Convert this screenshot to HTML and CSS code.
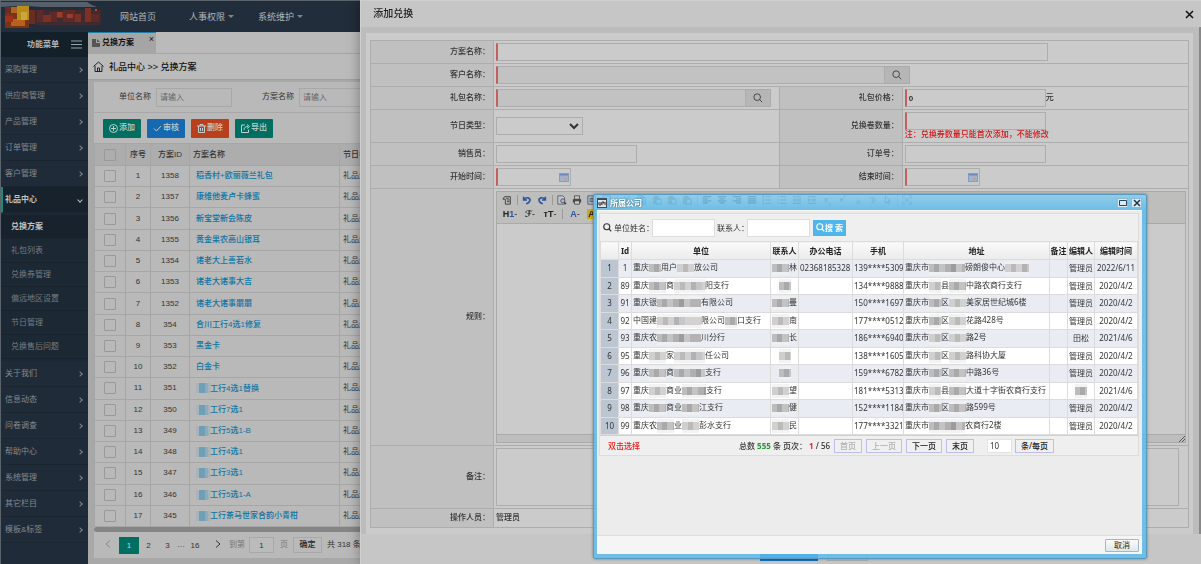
FILE: index.html
```html
<!DOCTYPE html>
<html lang="zh-CN">
<head>
  <meta charset="UTF-8">
  <meta name="viewport" content="width=device-width, initial-scale=1.0">
  <title>兑换方案</title>
  <link rel="stylesheet" href="styles.css">
</head>
<body>
  <svg width="0" height="0" class="defs">
    <symbol id="i-search" viewBox="0 0 12 12"><circle cx="5" cy="5" r="4" fill="none" stroke="currentColor"/><path d="M8 8l3 3" stroke="currentColor" fill="none"/></symbol>
    <symbol id="i-cal" viewBox="0 0 10 9"><path d="M0 0h10v9H0z" fill="#8a9cbc"/><path d="M1 3h8v5H1z" fill="#a3b2cc"/><path d="M1 1h8v1H1z" fill="#6a8bc0"/><path d="M5 5h3v2H5z" fill="#d09a8a"/></symbol>
    <symbol id="i-paste" viewBox="0 0 12 12"><path d="M1 2h8v9H1z" fill="#8a7d55"/><path d="M3 1h4v2H3z" fill="#555"/><path d="M5 5h6v6H5z" fill="#a9bfd8" stroke="#456"/></symbol>
  </svg>

  <div class="app">
    <header class="topbar">
      <div class="logo">
        <svg width="104" height="30" shape-rendering="crispEdges">
          <path d="M0 0h86q4 3 10 5H40Q20 3 0 5z" fill="#56606a" shape-rendering="auto"/>
          <path d="M30 8h70v12H30z" fill="#3f2a30"/>
          <path d="M4 6h24v20H4z" fill="#7a3218"/><path d="M4 5h8v6H4zM28 8h6v14h-6z" fill="#6b2c20"/>
          <path d="M10 5h6v6h-6zM10 17h14v7H10z" fill="#b4621c"/><path d="M16 4h12v14H16z" fill="#b98d1c"/>
          <path d="M20 10h6v8h-6z" fill="#cba83a"/><path d="M4 14h8v6H4z" fill="#a0301a"/>
          <path d="M36 8h6v12h-6zM48 10h8v12h-8zM62 8h12v12H62zM90 12h8v8h-8z" fill="#5e2a29"/>
          <path d="M42 13h8v8h-8zM56 10h6v6h-6zM74 12h6v10h-6zM84 6h6v14h-6z" fill="#7b3226"/>
          <path d="M56 10h5v5h-5zM66 12h6v4h-6z" fill="#a03c22"/>
          <path d="M34 20h66v3H34z" fill="#3f2a30"/><path d="M94 7h2v2h-2z" fill="#d03c1c"/>
        </svg>
      </div>
      <nav class="topnav">
        <a href="#">网站首页</a>
        <a href="#" class="drop">人事权限</a>
        <a href="#" class="drop">系统维护</a>
      </nav>
    </header>

    <div class="layout">
      <aside class="sidebar">
        <div class="side-title"><span>功能菜单</span><svg width="11" height="9"><path d="M0 1h11M0 4.500h11M0 8h11" stroke="#9aa0a5"/></svg></div>
        <a href="#" class="item">采购管理</a>
        <a href="#" class="item">供应商管理</a>
        <a href="#" class="item">产品管理</a>
        <a href="#" class="item">订单管理</a>
        <a href="#" class="item">客户管理</a>
        <a href="#" class="item open">礼品中心</a>
        <div class="sub">
          <a href="#" class="on">兑换方案</a>
          <a href="#">礼包列表</a>
          <a href="#">兑换券管理</a>
          <a href="#">偏远地区设置</a>
          <a href="#">节日管理</a>
          <a href="#">兑换售后问题</a>
        </div>
        <a href="#" class="item">关于我们</a>
        <a href="#" class="item">信息动态</a>
        <a href="#" class="item">问卷调查</a>
        <a href="#" class="item">帮助中心</a>
        <a href="#" class="item">系统管理</a>
        <a href="#" class="item">其它栏目</a>
        <a href="#" class="item">模板&amp;标签</a>
      </aside>

      <main class="main">
        <div class="tabs">
          <a href="#" class="tab"><svg width="8" height="8"><path d="M0 0h4v4h4v4H0z" fill="#555"/><path d="M5 0l3 3H5z" fill="#555"/></svg>兑换方案<span class="tab-x">×</span></a>
        </div>
        <div class="crumb">
          <svg width="11" height="11" viewBox="0 0 11 11" fill="none" stroke="#222"><path d="M.5 5.500L5.500 1l5 4.500M2 5v5.500h7V5M4.500 10V7h2v3"/></svg>
          礼品中心 &gt;&gt; 兑换方案
        </div>
        <div class="panel">
          <form class="filter">
            <label for="f1">单位名称</label><input id="f1" type="text" placeholder="请输入">
            <label for="f2">方案名称</label><input id="f2" type="text" placeholder="请输入">
          </form>
          <div class="tools">
            <button class="btn"><svg width="9" height="9" viewBox="0 0 9 9" fill="none" stroke="currentColor"><circle cx="4.500" cy="4.500" r="4"/><path d="M2 4.500h5M4.500 2v5"/></svg>添加</button>
            <button class="btn blue"><svg width="9" height="9" viewBox="0 0 9 9" fill="none" stroke="currentColor"><path d="M1 4.500L3.500 7 8 2"/></svg>审核</button>
            <button class="btn red"><svg width="9" height="9" viewBox="0 0 9 9" fill="none" stroke="currentColor"><path d="M0 2h9M3 2V.5h3V2M1.500 2v6.500h6V2M3.500 4v3M5.500 4v3"/></svg>删除</button>
            <button class="btn"><svg width="9" height="9" viewBox="0 0 9 9" fill="none" stroke="currentColor"><path d="M4 1H.5v7.500h7V5.500M3 6c0-2 1-3.500 4-3.500M6 .5l2.500 2L6 4.500"/></svg>导出</button>
          </div>
          <div class="grid-wrap">
            <table class="grid">
              <colgroup><col class="g1"><col class="g2"><col class="g3"><col class="g4"><col></colgroup>
              <thead><tr><th><input type="checkbox" aria-label="全选"></th><th>序号</th><th>方案ID</th><th class="l">方案名称</th><th class="l">节日名称</th></tr></thead>
              <tbody>
                <tr><td><input type="checkbox" aria-label="1358"></td><td>1</td><td>1358</td><td><a href="#">稻香村+欧丽薇兰礼包</a></td><td>礼品册</td></tr>
                <tr><td><input type="checkbox" aria-label="1357"></td><td>2</td><td>1357</td><td><a href="#">康维他麦卢卡蜂蜜</a></td><td>礼品册</td></tr>
                <tr><td><input type="checkbox" aria-label="1356"></td><td>3</td><td>1356</td><td><a href="#">新宝堂新会陈皮</a></td><td>礼品册</td></tr>
                <tr><td><input type="checkbox" aria-label="1355"></td><td>4</td><td>1355</td><td><a href="#">黄金果农高山银耳</a></td><td>礼品册</td></tr>
                <tr><td><input type="checkbox" aria-label="1354"></td><td>5</td><td>1354</td><td><a href="#">诸老大上善若水</a></td><td>礼品册</td></tr>
                <tr><td><input type="checkbox" aria-label="1353"></td><td>6</td><td>1353</td><td><a href="#">诸老大诸事大吉</a></td><td>礼品册</td></tr>
                <tr><td><input type="checkbox" aria-label="1352"></td><td>7</td><td>1352</td><td><a href="#">诸老大诸事朤朤</a></td><td>礼品册</td></tr>
                <tr><td><input type="checkbox" aria-label="354"></td><td>8</td><td>354</td><td><a href="#">合川工行4选1修复</a></td><td>礼品册</td></tr>
                <tr><td><input type="checkbox" aria-label="353"></td><td>9</td><td>353</td><td><a href="#">黑金卡</a></td><td>礼品册</td></tr>
                <tr><td><input type="checkbox" aria-label="352"></td><td>10</td><td>352</td><td><a href="#">白金卡</a></td><td>礼品册</td></tr>
                <tr><td><input type="checkbox" aria-label="351"></td><td>11</td><td>351</td><td><a href="#"><i class="mk"></i>工行4选1替换</a></td><td>礼品册</td></tr>
                <tr><td><input type="checkbox" aria-label="350"></td><td>12</td><td>350</td><td><a href="#"><i class="mk"></i>工行7选1</a></td><td>礼品册</td></tr>
                <tr><td><input type="checkbox" aria-label="349"></td><td>13</td><td>349</td><td><a href="#"><i class="mk"></i>工行5选1-B</a></td><td>礼品册</td></tr>
                <tr><td><input type="checkbox" aria-label="348"></td><td>14</td><td>348</td><td><a href="#"><i class="mk"></i>工行4选1</a></td><td>礼品册</td></tr>
                <tr><td><input type="checkbox" aria-label="347"></td><td>15</td><td>347</td><td><a href="#"><i class="mk"></i>工行3选1</a></td><td>礼品册</td></tr>
                <tr><td><input type="checkbox" aria-label="346"></td><td>16</td><td>346</td><td><a href="#"><i class="mk"></i>工行5选1-A</a></td><td>礼品册</td></tr>
                <tr><td><input type="checkbox" aria-label="345"></td><td>17</td><td>345</td><td><a href="#"><i class="mk"></i>工行茶马世家合韵小青柑</a></td><td>礼品册</td></tr>
              </tbody>
            </table>
          </div>
          <div class="hscroll"></div>
          <div class="pager">
            <a href="#" class="arr off"><svg width="6" height="8" fill="none" stroke="currentColor"><path d="M5 .5L1 4l4 3.500"/></svg></a>
            <a href="#" class="cur">1</a><a href="#">2</a><a href="#">3</a><span class="dots">…</span><a href="#" class="p16">16</a>
            <a href="#" class="arr"><svg width="6" height="8" fill="none" stroke="currentColor"><path d="M1 .5L5 4 1 7.500"/></svg></a>
            <label for="pg" class="dim">到第</label><input id="pg" type="text" value="1"><span class="dim">页</span>
            <button class="ok">确定</button><span>共 318 条</span>
          </div>
        </div>
      </main>
    </div>
  </div>

  <section class="drawer">
    <header class="drawer-head"><h1>添加兑换</h1><button class="x" aria-label="关闭"><svg width="9" height="9" stroke="#111" stroke-width="1.500"><path d="M1 1l7 7M8 1L1 8"/></svg></button></header>
    <div class="drawer-body">
      <form class="sheet">
        <table class="form">
          <colgroup><col class="c-l"><col class="c-f"><col class="c-l"><col class="c-f"></colgroup>
          <tr><th><label for="a1">方案名称：</label></th><td colspan="3"><input id="a1" class="req wide" type="text"></td></tr>
          <tr><th><label for="a2">客户名称：</label></th><td colspan="3"><div class="pick cust"><input id="a2" class="req" type="text" readonly><button type="button" aria-label="选择客户"><svg width="10" height="10"><use href="#i-search"/></svg></button></div></td></tr>
          <tr><th><label for="a3">礼包名称：</label></th><td><div class="pick gift"><input id="a3" class="req" type="text" readonly><button type="button" aria-label="选择礼包"><svg width="10" height="10"><use href="#i-search"/></svg></button></div></td>
            <th><label for="a4">礼包价格：</label></th><td><div class="pick"><input id="a4" class="req mid num" type="text" value="0"><span>元</span></div></td></tr>
          <tr><th><label for="a5">节日类型：</label></th><td><select id="a5"><option></option></select></td>
            <th><label for="a6">兑换卷数量：</label></th><td><input id="a6" class="req mid" type="text"><p class="note">注：兑换券数量只能首次添加，不能修改</p></td></tr>
          <tr><th><label for="a7">销售员：</label></th><td><input id="a7" class="mid" type="text"></td>
            <th><label for="a8">订单号：</label></th><td><input id="a8" class="mid" type="text"></td></tr>
          <tr><th><label for="a9">开始时间：</label></th><td><div class="date"><input id="a9" class="req" type="text"><svg width="10" height="9"><use href="#i-cal"/></svg></div></td>
            <th><label for="a10">结束时间：</label></th><td><div class="date"><input id="a10" class="req" type="text"><svg width="10" height="9"><use href="#i-cal"/></svg></div></td></tr>
          <tr><th><label for="rule">规则：</label></th><td colspan="3">
            <div class="editor">
              <div class="ed-tools">
                <div class="ed-row">
                  <button type="button" aria-label="源代码"><svg viewBox="0 0 12 12"><path d="M3 2h7v9H4V5H1l2-3z" fill="#bbb" stroke="#333"/><path d="M5 4h3M6 6h3M6 8h3" stroke="#333"/></svg></button><i></i>
                  <button type="button" aria-label="撤销"><svg viewBox="0 0 12 12"><path d="M2 2v4h4M2.500 5.500C5 2 10 3 9.500 6.500 9 9 7 10 5 10.500" fill="none" stroke="#2c56a0" stroke-width="2"/></svg></button>
                  <button type="button" aria-label="重做"><svg viewBox="0 0 12 12"><path d="M10 2v4H6M9.500 5.500C7 2 2 3 2.500 6.500 3 9 5 10 7 10.500" fill="none" stroke="#2c56a0" stroke-width="2"/></svg></button><i></i>
                  <button type="button" aria-label="预览"><svg viewBox="0 0 12 12"><path d="M1 1h6l2 2v8H1z" fill="#c4c8cc" stroke="#556"/><circle cx="7" cy="7" r="2.500" fill="#a8bac8" stroke="#445"/><path d="M9 9l2 2" stroke="#333" stroke-width="1.500"/></svg></button>
                  <button type="button" aria-label="打印"><svg viewBox="0 0 12 12"><path d="M3 1h6v4H3z" fill="#ccc" stroke="#444"/><path d="M1 5h10v4H1z" fill="#444"/><path d="M3 7h6v4H3z" fill="#ccc" stroke="#444"/></svg></button>
                  <button type="button" aria-label="模板"><svg viewBox="0 0 12 12"><path d="M1 1h9v10H1z" fill="#b5bfca" stroke="#456"/><path d="M3 4h5M3 6h5M3 8h5" stroke="#345"/></svg></button>
                  <button type="button" aria-label="代码"><svg viewBox="0 0 12 12"><path d="M1 1h9v10H1z" fill="#b5bfca" stroke="#456"/></svg></button><i></i>
                  <button type="button" aria-label="剪切"><svg viewBox="0 0 12 12"><path d="M3 1l5 8M9 1L4 9" stroke="#456"/></svg></button>
                  <button type="button" aria-label="复制"><svg viewBox="0 0 12 12"><path d="M1 1h6v8H1zM4 3h6v8H4z" fill="#9db6d0" stroke="#456"/></svg></button>
                  <button type="button" aria-label="粘贴"><svg><use href="#i-paste"/></svg></button>
                  <button type="button" aria-label="粘贴文本"><svg><use href="#i-paste"/></svg></button>
                  <button type="button" aria-label="粘贴Word"><svg><use href="#i-paste"/></svg></button><i></i>
                  <button type="button" aria-label="左对齐"><svg viewBox="0 0 12 12"><path d="M1 2h10M1 4.500h6M1 7h10M1 9.500h6" stroke="#333" stroke-width="1.500"/></svg></button>
                  <button type="button" aria-label="居中"><svg viewBox="0 0 12 12"><path d="M1 2h10M3 4.500h6M1 7h10M3 9.500h6" stroke="#333" stroke-width="1.500"/></svg></button>
                  <button type="button" aria-label="右对齐"><svg viewBox="0 0 12 12"><path d="M1 2h10M5 4.500h6M1 7h10M5 9.500h6" stroke="#333" stroke-width="1.500"/></svg></button>
                  <button type="button" aria-label="两端对齐"><svg viewBox="0 0 12 12"><path d="M1 2h10M1 4.500h10M1 7h10M1 9.500h10" stroke="#333" stroke-width="1.500"/></svg></button>
                  <button type="button" aria-label="编号"><svg viewBox="0 0 12 12"><path d="M4 2h7M4 6h7M4 10h7M1.500 0v4M1.500 5v3M1.500 9v3" stroke="#444"/></svg></button>
                  <button type="button" aria-label="项目符号"><svg viewBox="0 0 12 12"><path d="M4 2h7M4 6h7M4 10h7M1 2h1.500M1 6h1.500M1 10h1.500" stroke="#444"/></svg></button>
                  <button type="button" aria-label="增加缩进"><svg viewBox="0 0 12 12"><path d="M1 2h10M6 5h5M6 7h5M1 10h10M1 6h4M3 4l2 2-2 2" fill="none" stroke="#444"/></svg></button>
                  <button type="button" aria-label="减少缩进"><svg viewBox="0 0 12 12"><path d="M1 2h10M6 5h5M6 7h5M1 10h10M1 6h4M3 4L1 6l2 2" fill="none" stroke="#444"/></svg></button>
                  <button type="button">x<sub>₂</sub></button>
                  <button type="button">x<sup>²</sup></button>
                  <button type="button" aria-label="清理"><svg viewBox="0 0 12 12"><path d="M3 1l4 5-3 4 6 1-1-5-2-1z" fill="#a58a3a"/></svg></button>
                  <button type="button" aria-label="快速排版"><svg viewBox="0 0 12 12"><path d="M2 2h6l3 4-5 5-1-3 2-2z" fill="#8c9450"/></svg></button>
                  <button type="button" aria-label="全选"><svg viewBox="0 0 12 12"><path d="M4 1v9l2-2 2 3 1-1-1.500-3H10z" fill="#ccd" stroke="#456"/></svg></button><i></i>
                  <button type="button" aria-label="全屏"><svg viewBox="0 0 12 12"><path d="M1 4V1h3M8 1h3v3M11 8v3H8M4 11H1V8M3 3l6 6M9 3L3 9" fill="none" stroke="#567"/></svg></button>
                </div>
                <div class="ed-row txt">
                  <button type="button"><b>H<em>1</em></b>-</button>
                  <button type="button"><b class="script">ℱ</b>-</button>
                  <button type="button"><b>тT</b>-</button><i></i>
                  <button type="button"><b class="fc">A</b>-</button>
                  <button type="button" class="hl"><b class="bc">A</b>-</button>
                </div>
              </div>
              <textarea id="rule"></textarea>
              <div class="ed-foot"><svg width="6" height="6" stroke="#555"><path d="M0 6l6-6M3 6l3-3"/></svg></div>
            </div>
          </td></tr>
          <tr><th><label for="memo">备注：</label></th><td colspan="3"><textarea id="memo" class="memo"></textarea></td></tr>
          <tr><th>操作人员：</th><td colspan="3" class="op">管理员</td></tr>
        </table>
      </form>
    </div>
    <footer class="drawer-foot"><button class="save" aria-label="提交"></button><button class="back" aria-label="返回"></button></footer>
  </section>

  <div class="win" role="dialog" aria-labelledby="wt">
    <div class="win-head">
      <svg width="10" height="10" viewBox="0 0 10 10"><path d="M0 0h10v10H0z" fill="#3d4c58"/><path d="M1 2h8v7H1z" fill="#dde6ec"/><path d="M2 4v3h2V4M5 7V4h2v1H6M8 4v3" fill="none" stroke="#333"/></svg>
      <h2 id="wt">所属公司</h2>
      <button aria-label="最大化"><svg width="8" height="6"><path d="M.5.5h7v5h-7z" fill="none" stroke="#345"/></svg></button>
      <button aria-label="关闭"><svg width="8" height="8" stroke="#234" stroke-width="1.500"><path d="M1 1l6 6M7 1L1 7"/></svg></button>
    </div>
    <div class="win-body">
      <div class="box">
        <form class="search">
          <svg width="9" height="9" stroke-width="1.500"><use href="#i-search"/></svg>
          <label for="s1">单位姓名：</label><input id="s1" type="text">
          <label for="s2">联系人：</label><input id="s2" type="text">
          <button type="button"><svg width="9" height="9" stroke-width="1.500"><use href="#i-search"/></svg>搜 索</button>
        </form>
        <table class="list">
          <colgroup><col class="k1"><col class="k2"><col class="k3"><col class="k4"><col class="k5"><col class="k6"><col><col class="k1"><col class="k8"><col class="k9"></colgroup>
          <thead><tr><th></th><th>Id</th><th>单位</th><th>联系人</th><th>办公电话</th><th>手机</th><th>地址</th><th>备注</th><th>编辑人</th><th>编辑时间</th></tr></thead>
          <tbody>
            <tr><th>1</th><td>1</td><td>重庆<i class="m w2"></i>用户<i class="m w3 v"></i>放公司</td><td class="r"><i class="m w3"></i>林</td><td>02368185328</td><td>139****5309</td><td>重庆市<i class="m w6"></i>磅朗俊中心<i class="m w4 v"></i></td><td></td><td class="c">管理员</td><td class="c">2022/6/11</td></tr>
            <tr><th>2</th><td>89</td><td>重庆<i class="m w3"></i>商<i class="m w5 v"></i>阳支行</td><td class="c"><i class="m w2"></i></td><td></td><td>134****9888</td><td>重庆市<i class="m w2 v"></i>县<i class="m w3"></i>中路农商行支行</td><td></td><td class="c">管理员</td><td class="c">2020/4/2</td></tr>
            <tr><th>3</th><td>91</td><td>重庆银<i class="m w7"></i>有限公司</td><td class="r"><i class="m w3"></i>曼</td><td></td><td>150****1697</td><td>重庆市<i class="m w2"></i>区<i class="m w3 v"></i>美家居世纪城6楼</td><td></td><td class="c">管理员</td><td class="c">2020/4/2</td></tr>
            <tr><th>4</th><td>92</td><td>中国建<i class="m w7 v"></i>限公司<i class="m w2"></i>口支行</td><td class="r"><i class="m w3 v"></i>南</td><td></td><td>177****0512</td><td>重庆市<i class="m w2"></i>区<i class="m w3 v"></i>花路428号</td><td></td><td class="c">管理员</td><td class="c">2020/4/2</td></tr>
            <tr><th>5</th><td>93</td><td>重庆农<i class="m w7"></i>川分行</td><td class="r"><i class="m w3"></i>长</td><td></td><td>186****6940</td><td>重庆市<i class="m w2 v"></i>区<i class="m w3 v"></i>路2号</td><td></td><td class="c">田松</td><td class="c">2021/4/6</td></tr>
            <tr><th>6</th><td>95</td><td>重庆<i class="m w3 v"></i>家<i class="m w5 v"></i>任公司</td><td class="c"><i class="m w2 v"></i></td><td></td><td>138****1605</td><td>重庆市<i class="m w2 v"></i>区<i class="m w3 v"></i>路科协大厦</td><td></td><td class="c">管理员</td><td class="c">2020/4/2</td></tr>
            <tr><th>7</th><td>96</td><td>重庆<i class="m w3"></i>商<i class="m w5"></i>支行</td><td class="c"><i class="m w2"></i></td><td></td><td>159****6782</td><td>重庆市<i class="m w2"></i>区<i class="m w3"></i>中路36号</td><td></td><td class="c">管理员</td><td class="c">2020/4/2</td></tr>
            <tr><th>8</th><td>97</td><td>重庆<i class="m w3 v"></i>商业<i class="m w4"></i>支行</td><td class="r"><i class="m w3 v"></i>望</td><td></td><td>181****5313</td><td>重庆市<i class="m w2 v"></i>县<i class="m w3"></i>大道十字街农商行支行</td><td></td><td class="c"><i class="m w2"></i></td><td class="c">2021/4/6</td></tr>
            <tr><th>9</th><td>98</td><td>重庆<i class="m w3"></i>商业<i class="m w3"></i>江支行</td><td class="r"><i class="m w3"></i>健</td><td></td><td>152****1184</td><td>重庆市<i class="m w2"></i>区<i class="m w3"></i>路599号</td><td></td><td class="c">管理员</td><td class="c">2020/4/2</td></tr>
            <tr><th>10</th><td>99</td><td>重庆农<i class="m w3"></i>业<i class="m w3 v"></i>彭水支行</td><td class="r"><i class="m w3 v"></i>民</td><td></td><td>177****3321</td><td>重庆市<i class="m w6"></i>农商行2楼</td><td></td><td class="c">管理员</td><td class="c">2020/4/2</td></tr>
          </tbody>
        </table>
        <div class="list-foot">
          <strong class="tip">双击选择</strong>
          <span class="sum">总数 <b class="g">555</b> 条 页次： <b class="rd">1</b> / 56</span>
          <button disabled>首页</button><button disabled>上一页</button><button>下一页</button><button>末页</button>
          <input type="text" value="10" aria-label="每页条数"><button>条/每页</button>
        </div>
      </div>
    </div>
    <div class="win-foot"><button>取消</button></div>
  </div>
</body>
</html>
```
FILE: styles.css
```css
*{margin:0;padding:0;box-sizing:border-box}
body{height:100vh;overflow:hidden;font:8px/12px "Liberation Sans","Noto Sans CJK SC",sans-serif;color:#333;background:#a8a8a8}
a{color:inherit;text-decoration:none}
button,input,select,textarea{font:inherit;color:inherit;border-radius:0}
button{cursor:pointer;border:none;background:none;white-space:nowrap}
svg{flex:none}
.defs{position:absolute}

.app{height:100%;display:flex;flex-direction:column;border-top:1px solid #5b646c;border-left:1px solid #5b646c}
.topbar{height:31px;flex:none;display:flex;align-items:center;background:#212d3a;color:#b2b5b8;font-size:9px}
.logo{width:119px;height:30px}
.topnav{display:flex;gap:33px}
.drop{display:flex;align-items:center;gap:3px;margin-right:-9px}
.drop:after{content:"";border:3px solid transparent;border-top-color:#7d858c;border-bottom:0}

.layout{flex:1;display:flex;min-height:0}
.sidebar{width:87px;flex:none;background:#1f2b38;color:#838a91;overflow:hidden}
.side-title{height:25px;display:flex;align-items:center;justify-content:flex-end;gap:12px;padding-right:6px;background:#13202a;color:#b4b7ba;font-weight:bold}
.item{display:flex;justify-content:space-between;align-items:center;height:26px;padding:1px 6px 0 4px;border-bottom:1px solid #1a2530}
.item:after{content:"";width:3px;height:3px;border:solid #7d858c;border-width:1px 1px 0 0;transform:rotate(45deg)}
.item.open{background:#17222c;color:#bfc2c5;font-weight:bold;border-left:2px solid #1b8a76;padding-left:2px}
.item.open:after{transform:rotate(135deg);border-color:#bbb}
.sub{padding:2px 0;background:#1c2833}
.sub a{display:block;height:24px;line-height:23px;padding-left:10px;border-bottom:1px solid #18232d;color:#747c83}
.sub .on{background:#17222c;color:#bfc2c5;font-weight:bold}

.main{flex:1;min-width:0;display:flex;flex-direction:column;background:#a8a8a8;padding-bottom:6px}
.tabs{height:22px;flex:none;display:flex;background:#bababa;border-bottom:1px solid #a6a6a6}
.tab{position:relative;display:flex;align-items:center;gap:2px;width:68px;padding-left:4px;background:#a5a5a5;border-top:1px solid #1f7fa5;color:#111;font-weight:bold}
.tab-x{position:absolute;right:2px;top:0;font-size:9px;font-weight:normal}
.crumb{height:26px;flex:none;display:flex;align-items:center;gap:5px;padding-left:5px;background:#bbb;color:#111;font-size:9px;font-weight:500;border-bottom:1px solid #a0a0a0}
.panel{flex:1;min-height:0;display:flex;flex-direction:column;margin:2px 6px 0;background:#b9b9b9}
.filter{height:31px;flex:none;display:flex;align-items:center;gap:5px;padding-left:25px;border-bottom:1px solid #a8a8a8}
.filter label{width:32px}
.filter input{width:76px;height:19px;padding:0 3px;margin-right:25px;background:#b9b9b9;border:1px solid #a8a8a8}
.filter input::placeholder{color:#666}
.tools{height:30px;flex:none;display:flex;align-items:center;gap:6px;padding-left:9px}
.btn{display:flex;align-items:center;justify-content:center;gap:1px;width:38px;height:19px;border-radius:1px;background:#006f61;color:#c3cfcd;font-weight:500}
.blue{background:#1669b0}
.red{background:#b8401c}
.grid-wrap{flex:1;min-height:0;overflow:hidden}
.grid{width:100%;height:100%;table-layout:fixed;border-collapse:collapse}
.grid .g1{width:31px}
.grid .g2{width:25px}
.grid .g3{width:39px}
.grid .g4{width:150px}
.grid th,.grid td{height:18px;border:1px solid #a6a6a6;text-align:center;line-height:10px;overflow:hidden;white-space:nowrap}
.grid thead th{height:22px;background:#adadad;font-weight:500}
.grid th.l,.grid td:nth-child(n+4){text-align:left;padding-left:3px}
.grid td:nth-child(4){padding-left:6px}
.grid td a{color:#0d73a3;font-weight:500}
.grid input{appearance:none;display:block;width:12px;height:12px;margin:0 auto;border:1px solid #999;border-radius:1px}
.mk{display:inline-block;width:14px;height:10px;vertical-align:middle;background:linear-gradient(90deg,#a9b3b8 3px,#6f9fb8 3px 9px,#8fabb9 9px 12px,#a5b3ba 12px)}
.hscroll{height:5px;flex:none;background:#868686;border-radius:3px}
.pager{height:26px;flex:none;display:flex;align-items:center;padding-left:3px;white-space:nowrap}
.pager a{width:19px;height:17px;line-height:17px;text-align:center}
.pager .cur{width:20px;background:#006f61;color:#c8d4d2}
.pager .arr{width:22px}
.pager .off{color:#888}
.pager .dots{width:6px}
.pager .p16{width:24px}
.pager .dim{color:#777}
.pager input{width:25px;height:16px;margin:0 6px 0 4px;text-align:center;background:#bbb;border:1px solid #a8a8a8}
.ok{width:29px;height:16px;margin:0 5px;border:1px solid #a8a8a8;color:#222;font-weight:500}

/* 右侧抽屉 */
.drawer{position:fixed;top:0;right:0;bottom:0;width:70%;display:flex;flex-direction:column;background:#c6c6c6;border-top:1px solid #cfcfcf;border-left:1px solid #d0d0d0;box-shadow:0 0 12px rgba(0,0,0,.35)}
.drawer-head{height:26px;flex:none;display:flex;align-items:center;justify-content:space-between;padding:0 7px 0 12px}
.drawer-head h1{font-size:10px;font-weight:500;color:#222}
.x{width:9px;height:12px;line-height:0}
.drawer-body{padding:6px 6px 0 5px;background:#bcbcbc;border-right:2px solid #888}
.sheet{padding:7px 4px 6px;background:#cbcbcb}
.form{width:100%;table-layout:fixed;border-collapse:collapse;border:1px solid #adadad}
.c-l{width:15%}
.c-f{width:35%}
.form th,.form td{padding:2px;border:1px solid #adadad}
.form th{background:#c0c0c0;text-align:right;font-weight:500;padding-right:3px}
.form input,.form select{display:block;height:18px;padding:0 2px;background:#cbcbcb;border:1px solid #adadad}
.form .req{border-left:2px solid #c25f5f}
.form .wide{width:80%}
.form .mid{width:141px}
.form .num{font-weight:bold}
.pick{display:flex;align-items:center;font-weight:500}
.pick input[readonly]{flex:1;background:#c2c2c2}
.pick button{width:25px;height:18px;line-height:0;background:#b6b6b6;border:1px solid #aaa;border-left:0}
.cust{width:60%}
.gift{width:275px;max-width:100%}
.form select{width:87px}
.note{line-height:10px;color:#d01616;font-weight:500}
.date{position:relative;width:75px}
.date input{width:100%}
.date svg{position:absolute;right:2px;top:5px}
.form .op{line-height:14px;font-weight:500}
.editor{height:252px;display:flex;flex-direction:column;border:1px solid #aaa}
.editor textarea{flex:1;width:100%;border:0;background:#cbcbcb;resize:none}
.ed-tools{padding:1px 3px 2px;background:#bebebc;border-bottom:1px solid #aaa}
.ed-row{display:flex;align-items:center;height:14px;overflow:hidden}
.ed-row button{width:15px;height:14px;flex:none;line-height:10px}
.ed-row svg{width:10px;height:10px;display:block;margin:auto}
.ed-row i{width:1px;height:10px;margin:0 2px;background:#999}
.ed-row sub,.ed-row sup{font-size:6px;line-height:0}
.ed-row.txt button{width:20px;color:#222;font-size:9px}
.ed-row.txt .hl{width:16px}
.ed-row em{font-style:normal;color:#2c56a0}
.script{font-family:"DejaVu Sans",serif}
.fc{color:#2c56a0}
.bc{padding:0 1px;background:#d3a80c}
.ed-foot{height:8px;display:flex;justify-content:flex-end;align-items:center;background:#bebebe;border-top:1px solid #aaa}
.memo{display:block;width:99%;height:58px;background:#cbcbcb;border:1px solid #adadad;resize:none}
.drawer-foot{flex:1;display:flex;justify-content:center;align-items:flex-end;gap:9px;padding:0 0 3px 66px}
.save{width:58px;height:20px;background:#1272bd}
.back{width:41px;height:20px;background:#c2c2c2;border:1px solid #b0b0b0}

/* 选择公司窗口 */
.win{position:fixed;right:54px;bottom:5px;width:554px;height:365px;display:flex;flex-direction:column;padding:0 4px 4px 3px;border:1px solid #5899bd;border-radius:2px;background:linear-gradient(rgba(130,208,246,.78),rgba(94,188,238,.84) 16px);box-shadow:0 0 3px rgba(0,0,0,.4);font-family:"Noto Sans","Noto Sans CJK SC",sans-serif}
.win-head{height:15px;flex:none;display:flex;align-items:center;gap:3px}
.win-head h2{flex:1;font-size:8px;line-height:12px;color:#fff;text-shadow:0 0 2px #356}
.win-head button{width:11px;height:10px;display:flex;align-items:center;justify-content:center;background:#d8ecf6;border:1px solid #8bbdd6}
.win-body{flex:1;padding:2px 3px 0 2px;background:#ececec;border-top:1px solid #fafafa}
.box{border:1px solid #ddd;background:#efefef}
.search{height:27px;display:flex;align-items:center;padding-left:3px}
.search > svg{margin-right:2px}
.search input{width:63px;height:18px;margin-right:2px;background:#fff;border:1px solid #ddd}
.search label{white-space:nowrap;margin-right:-2px}
.search button{display:flex;align-items:center;justify-content:center;width:33px;height:16px;margin-left:1px;background:#4eb6ec;color:#fff;font-weight:bold}
.list{width:100%;height:194px;table-layout:fixed;border-collapse:collapse;background:#fff}
.list .k1{width:18px}
.list .k2{width:13px}
.list .k3{width:139px}
.list .k4{width:28px}
.list .k5{width:54px}
.list .k6{width:51px}
.list .k8{width:27px}
.list .k9{width:43px}
.list th,.list td{height:15px;border:1px solid #dcdcdc;line-height:10px;padding:0 1px;overflow:hidden;white-space:nowrap}
.list thead th{height:18px;padding:0;background:linear-gradient(#fafafa,#ebebeb);color:#222}
.list tbody th{background:#bcc6d3;font-weight:normal}
.list tbody tr:nth-child(odd) td{background:#e9edf3}
.list td:nth-child(2),.list .c{text-align:center;padding:0}
.list .r{text-align:right}
/* 打码块 */
.m{display:inline-block;height:14px;padding:3px 0;vertical-align:middle;background:linear-gradient(90deg,#bdbdbd 5px,#a9a9ab 5px 10px,#c4c2c2 10px 16px,#b0b0b2 16px 22px,#9c9c9e 22px 27px,#c8c6c4 27px 33px,#b4b2b4 33px) content-box,rgba(240,240,240,.8)}
.m.v{background:linear-gradient(90deg,#cfcfcf 6px,#bcbab8 6px 11px,#d2d0d0 11px 17px,#b2b2b4 17px 22px,#c6c6c8 22px 28px,#d4d2d0 28px) content-box,rgba(240,240,240,.8)}
.w2{width:12px}
.w3{width:17px}
.w4{width:24px}
.w5{width:31px}
.w6{width:36px}
.w7{width:44px}
.list-foot{height:20px;display:flex;align-items:center;padding-left:8px;border-top:1px solid #d0d0d0;white-space:nowrap}
.tip{width:131px;color:#f01818;font-weight:500}
.sum{width:95px;font-weight:500}
.g{color:#2a9438}
.rd{color:#e8202c}
.list-foot button{height:14px;padding:0 5px;margin-right:4px;line-height:10px;border:1px solid #bdbdee;background:#f0f0f0;color:#222;font-weight:500}
.list-foot button:disabled{color:#b0b0b0}
.list-foot input{width:25px;height:14px;margin:0 3px 0 9px;padding:0 2px;background:#fff;border:1px solid #e4e4e4}
.win-foot{height:19px;flex:none;display:flex;justify-content:flex-end;align-items:center;padding-right:3px;background:#f5f5f5;border-top:1px solid #dedede}
.win-foot button{width:34px;height:13px;line-height:10px;background:linear-gradient(#fafcfd,#dde7ea);border:1px solid #a9b4bc;border-radius:1px;color:#222}
```
